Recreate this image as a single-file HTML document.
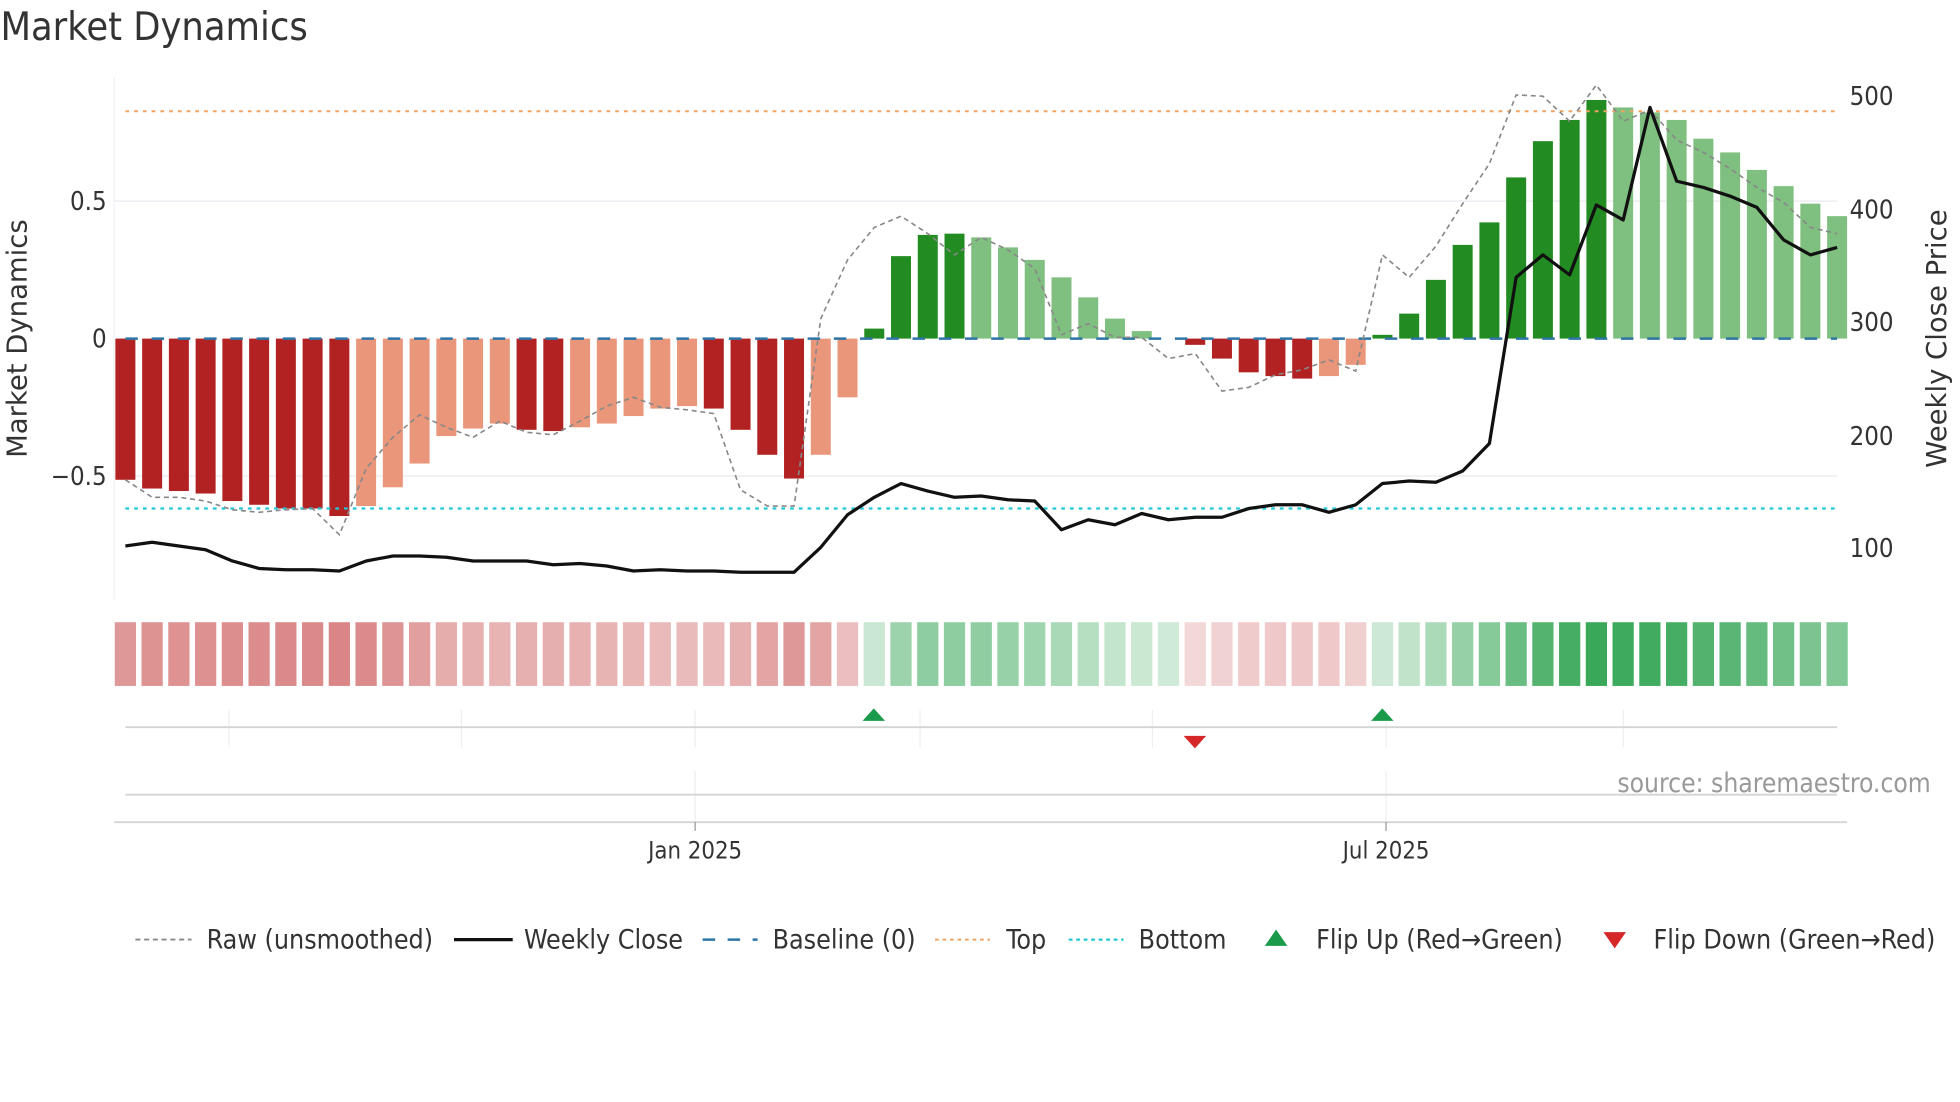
<!DOCTYPE html>
<html><head><meta charset="utf-8"><style>
html,body{margin:0;padding:0;background:#fff;}
svg{display:block;}
text{font-family:"DejaVu Sans Condensed","DejaVu Sans","Liberation Sans",sans-serif;fill:#333;}
</style></head><body>
<svg id="s" width="1960" height="1102" viewBox="0 0 1568 882" xmlns="http://www.w3.org/2000/svg">
<rect width="1568" height="882" fill="#fff"/>
<text x="0" y="32" font-size="31.5">Market Dynamics</text>
<line x1="91" y1="62" x2="91" y2="480" stroke="#eef0f4" stroke-width="1"/>
<line x1="91" y1="161" x2="1470" y2="161" stroke="#eceef3" stroke-width="1.2"/>
<line x1="91" y1="381" x2="1470" y2="381" stroke="#eceef3" stroke-width="1.2"/>
<g id="bars"></g>
<line x1="100" y1="89" x2="1470" y2="89" stroke="#f0a464" stroke-width="1.6" stroke-dasharray="3,4"/>
<line x1="100" y1="407" x2="1470" y2="407" stroke="#22c8d8" stroke-width="1.8" stroke-dasharray="3,4"/>
<line x1="100" y1="271" x2="1470" y2="271" stroke="#2e74a8" stroke-width="2" stroke-dasharray="10,11"/>
<polyline id="raw" fill="none" stroke="#888" stroke-width="1.3" stroke-dasharray="4,3"/>
<polyline id="close" fill="none" stroke="#111" stroke-width="2.6" stroke-linejoin="round"/>
<text x="85" y="168" font-size="20.5" text-anchor="end">0.5</text>
<text x="85" y="278" font-size="20.5" text-anchor="end">0</text>
<text x="85" y="388" font-size="20.5" text-anchor="end">−0.5</text>
<text transform="translate(21,271) rotate(-90)" font-size="22" text-anchor="middle" style="font-family:'DejaVu Sans',sans-serif">Market Dynamics</text>
<text x="1480" y="84" font-size="20.5">500</text>
<text x="1480" y="175" font-size="20.5">400</text>
<text x="1480" y="265" font-size="20.5">300</text>
<text x="1480" y="356" font-size="20.5">200</text>
<text x="1480" y="446" font-size="20.5">100</text>
<text transform="translate(1557,271) rotate(-90)" font-size="22" text-anchor="middle" style="font-family:'DejaVu Sans',sans-serif">Weekly Close Price</text>
<g id="heat"></g>
<g stroke="#eceef2" stroke-width="1">
<line x1="183" y1="568" x2="183" y2="598"/><line x1="369" y1="568" x2="369" y2="598"/><line x1="556" y1="568" x2="556" y2="598"/><line x1="736" y1="568" x2="736" y2="598"/><line x1="922" y1="568" x2="922" y2="598"/><line x1="1109" y1="568" x2="1109" y2="598"/><line x1="1299" y1="568" x2="1299" y2="598"/>
<line x1="556" y1="617" x2="556" y2="658"/><line x1="1109" y1="617" x2="1109" y2="658"/>
</g>
<line x1="100" y1="582" x2="1470" y2="582" stroke="#d4d4d4" stroke-width="1.5"/>
<line x1="100" y1="636" x2="1470" y2="636" stroke="#d4d4d4" stroke-width="1.5"/>
<line x1="91" y1="658" x2="1478" y2="658" stroke="#d4d4d4" stroke-width="1.5"/>
<line x1="556" y1="658" x2="556" y2="665" stroke="#999" stroke-width="1"/>
<line x1="1109" y1="658" x2="1109" y2="665" stroke="#999" stroke-width="1"/>
<polygon points="690,577 708,577 699,567" fill="#1a9a4a"/>
<polygon points="1097,577 1115,577 1106,567" fill="#1a9a4a"/>
<polygon points="947,589 965,589 956,599" fill="#d62728"/>
<text x="1545" y="634" font-size="21" text-anchor="end" style="fill:#999">source: sharemaestro.com</text>
<text x="556" y="687" font-size="19" text-anchor="middle">Jan 2025</text>
<text x="1109" y="687" font-size="19" text-anchor="middle">Jul 2025</text>
<line x1="108" y1="752" x2="153" y2="752" stroke="#888" stroke-width="1.5" stroke-dasharray="4,3"/>
<text x="165" y="759" font-size="21.3">Raw (unsmoothed)</text>
<line x1="363" y1="752" x2="410" y2="752" stroke="#111" stroke-width="2.6"/>
<text x="419" y="759" font-size="21.3">Weekly Close</text>
<line x1="562" y1="752" x2="606" y2="752" stroke="#2e74a8" stroke-width="2" stroke-dasharray="10,10"/>
<text x="618" y="759" font-size="21.3">Baseline (0)</text>
<line x1="748" y1="752" x2="792" y2="752" stroke="#f0a464" stroke-width="1.6" stroke-dasharray="3,3"/>
<text x="805" y="759" font-size="21.3">Top</text>
<line x1="855" y1="752" x2="899" y2="752" stroke="#22c8d8" stroke-width="1.8" stroke-dasharray="3,3"/>
<text x="911" y="759" font-size="21.3">Bottom</text>
<polygon points="1012,757 1030,757 1021,744" fill="#1a9a4a"/>
<text x="1053" y="759" font-size="21.3">Flip Up (Red→Green)</text>
<polygon points="1283,746 1301,746 1292,759" fill="#d62728"/>
<text x="1323" y="759" font-size="21.3">Flip Down (Green→Red)</text>
</svg>
<script>
var ns="http://www.w3.org/2000/svg";
var b=[[384,1],[391,1],[393,1],[395,1],[401,1],[404,1],[407,1],[407,1],[413,1],[405,0],[390,0],[371,0],[349,0],[343,0],[339,0],[344,1],[345,1],[342,0],[339,0],[333,0],[327,0],[325,0],[327,1],[344,1],[364,1],[383,1],[364,0],[318,0],[263,1],[205,1],[188,1],[187,1],[190,0],[198,0],[208,0],[222,0],[238,0],[255,0],[265,0],[270,0],[276,1],[287,1],[298,1],[301,1],[303,1],[301,0],[292,0],[268,1],[251,1],[224,1],[196,1],[178,1],[142,1],[113,1],[96,1],[80,1],[86,0],[90,0],[96,0],[111,0],[122,0],[136,0],[149,0],[163,0],[173,0]];
var cl=[437,434,437,440,449,455,456,456,457,449,445,445,446,449,449,449,452,451,453,457,456,457,457,458,458,458,438,412,398,387,393,398,397,400,401,424,416,420,411,416,414,414,407,404,404,410,404,387,385,386,377,355,222,204,220,164,176,86,145,150,157,166,192,204,198];
var rw=[384,398,398,401,408,410,408,407,428,375,350,332,342,350,337,346,348,337,325,318,326,328,331,392,405,405,255,208,182,173,187,204,190,200,215,268,259,270,270,287,283,313,310,300,296,288,297,204,222,197,163,131,76,77,97,68,97,88,112,122,135,150,162,182,187];
var step=(1470-100)/64;
var gb=document.getElementById("bars"),gh=document.getElementById("heat");
function r(g,x,y,w,h,f){var e=document.createElementNS(ns,"rect");e.setAttribute("x",x);e.setAttribute("y",y);e.setAttribute("width",w);e.setAttribute("height",h);e.setAttribute("fill",f);g.appendChild(e);}
var cp=[],rp=[];
for(var i=0;i<65;i++){
 var cx=100+i*step,v=b[i][0],d=b[i][1],neg=v>271;
 var col=neg?(d?"#b22222":"#e9967a"):(d?"#228b22":"#7fbf7f");
 if(Math.abs(v-271)>1) r(gb,cx-8,Math.min(v,271),16,Math.abs(v-271),col);
 var m=Math.min(Math.abs(v-271)/191,1);
 var a=0.22+0.7*m;
 var base=neg?[205,92,92]:[40,160,75];
 var c=base.map(function(k){return Math.round(255-(255-k)*a);});
 r(gh,cx-8.5,498,17,51,"rgb("+c.join(",")+")");
 cp.push(cx.toFixed(1)+","+cl[i]);rp.push(cx.toFixed(1)+","+rw[i]);
}
document.getElementById("close").setAttribute("points",cp.join(" "));
document.getElementById("raw").setAttribute("points",rp.join(" "));
</script>
</body></html>
